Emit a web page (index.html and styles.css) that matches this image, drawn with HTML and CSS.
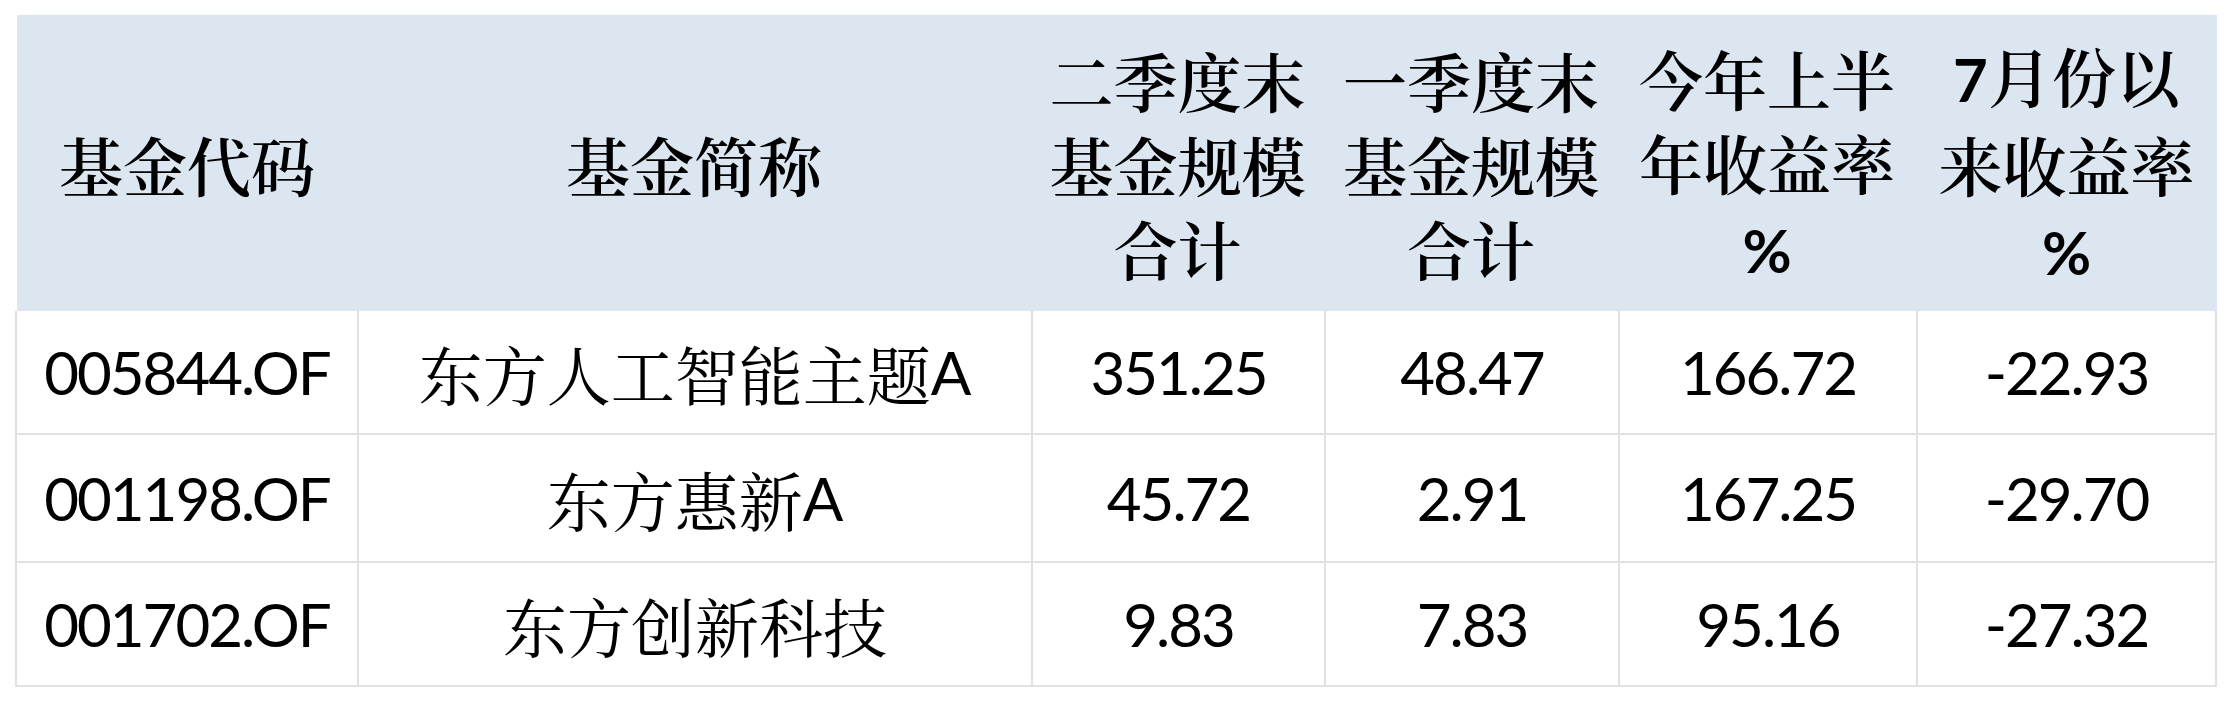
FILE: index.html
```html
<!DOCTYPE html>
<html lang="zh-CN">
<head>
<meta charset="utf-8">
<title>基金规模与收益率</title>
<link rel="stylesheet" href="styles.css">
</head>
<body>
<div class="page">
  <div class="fund-table" role="table">
    <div class="cell head first" role="columnheader">基金代码</div>
    <div class="cell head" role="columnheader">基金简称</div>
    <div class="cell head" role="columnheader"><span>二季度末<br>基金规模<br>合计</span></div>
    <div class="cell head" role="columnheader"><span>一季度末<br>基金规模<br>合计</span></div>
    <div class="cell head" role="columnheader"><span>今年上半<br>年收益率<br><b class="lat">%</b></span></div>
    <div class="cell head" role="columnheader"><span><b class="lat">7</b>月份以<br>来收益率<br><b class="lat">%</b></span></div>

    <div class="cell body num" role="cell">005844.OF</div>
    <div class="cell body name" role="cell">东方人工智能主题<span class="lat">A</span></div>
    <div class="cell body num" role="cell">351.25</div>
    <div class="cell body num" role="cell">48.47</div>
    <div class="cell body num" role="cell">166.72</div>
    <div class="cell body num last" role="cell">-22.93</div>

    <div class="cell body num" role="cell">001198.OF</div>
    <div class="cell body name" role="cell">东方惠新<span class="lat">A</span></div>
    <div class="cell body num" role="cell">45.72</div>
    <div class="cell body num" role="cell">2.91</div>
    <div class="cell body num" role="cell">167.25</div>
    <div class="cell body num last" role="cell">-29.70</div>

    <div class="cell body num" role="cell">001702.OF</div>
    <div class="cell body name" role="cell">东方创新科技</div>
    <div class="cell body num" role="cell">9.83</div>
    <div class="cell body num" role="cell">7.83</div>
    <div class="cell body num" role="cell">95.16</div>
    <div class="cell body num last" role="cell">-27.32</div>
  </div>
</div>
</body>
</html>
```
FILE: styles.css
```css
html, body {
  margin: 0;
  padding: 0;
  background: #ffffff;
}

.page {
  padding: 15px 0 0 15px;
}

.fund-table {
  display: grid;
  grid-template-columns: 342px 674px 293px 294px 298px 301px;
  grid-template-rows: 296px 124px 128px 124px;
  width: 2202px;
  font-family: "Noto Serif CJK SC", "Source Han Serif SC", "AR PL UMing CN", "Noto Sans CJK SC", serif;
  color: #000000;
}

.cell {
  box-sizing: border-box;
  display: flex;
  align-items: center;
  justify-content: center;
  text-align: center;
}

.head {
  background: #dce6f1;
  font-size: 64px;
  font-weight: 600;
  line-height: 84px;
}

.head.first {
  border-left: 2px solid #ffffff;
}

.lat {
  font-family: "Lato", "Liberation Sans", sans-serif;
}

.head .lat {
  font-weight: 700;
  font-size: 60px;
}

.body {
  border-left: 2px solid #e1e1e1;
  border-bottom: 2px solid #e1e1e1;
  font-size: 64px;
  font-weight: 400;
  line-height: 1;
}

.body.last {
  border-right: 2px solid #e1e1e1;
}

.num {
  font-family: "Lato", "Liberation Sans", sans-serif;
  font-size: 60px;
  letter-spacing: -2px;
}

.name .lat {
  font-size: 60px;
}
```
